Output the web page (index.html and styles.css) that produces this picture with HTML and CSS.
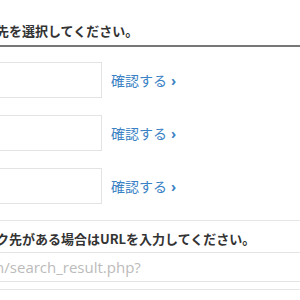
FILE: index.html
```html
<!DOCTYPE html>
<html lang="ja">
<head>
  <meta charset="UTF-8" />
  <meta name="viewport" content="width=device-width, initial-scale=1">
  <title>リンク先設定</title>
  <link rel="stylesheet" href="styles.css" />
</head>
<body>
  <main class="wrap">
    <section class="select-box">
      <h2 class="sec-title">遷移先を選択してください。</h2>
      <ul class="target-list">
        <li class="target-row">
          <div class="target-field"></div>
          <a class="check-link" href="#">確認する<span class="arrow">›</span></a>
        </li>
        <li class="target-row">
          <div class="target-field"></div>
          <a class="check-link" href="#">確認する<span class="arrow">›</span></a>
        </li>
        <li class="target-row">
          <div class="target-field"></div>
          <a class="check-link" href="#">確認する<span class="arrow">›</span></a>
        </li>
      </ul>
    </section>
    <section class="url-box">
      <h2 class="sec-title sub">リンク先がある場合はURLを入力してください。</h2>
      <input class="url-input" type="text" placeholder="ain/search_result.php?" />
      <div class="next-line"></div>
    </section>
  </main>
</body>
</html>
```

FILE: styles.css
```css
* {
  margin: 0;
  padding: 0;
  box-sizing: border-box;
}

html, body {
  width: 100%;
  height: 100%;
  background: #ffffff;
  overflow: hidden;
}

body {
  font-family: "Noto Sans CJK JP", "Open Sans", sans-serif;
  color: #333333;
}

.wrap {
  margin-left: -30px;
  width: 360px;
}

.sec-title {
  font-size: 13px;
  font-weight: bold;
  line-height: 20px;
  color: #333333;
  padding: 21px 0 4px;
  border-bottom: 2px solid #777777;
}

.sec-title.sub {
  padding: 8px 0 0;
  border-bottom: none;
}

.target-list {
  list-style: none;
  padding: 15px 0 16px;
  border-bottom: 1px solid #e6e6e6;
}

.target-row {
  display: flex;
  align-items: center;
  margin-bottom: 17px;
}

.target-row:last-child {
  margin-bottom: 0;
}

.target-field {
  width: 132px;
  height: 36px;
  border: 1px solid #e3e3e3;
  background: #ffffff;
}

.check-link {
  margin-left: 9px;
  font-size: 14px;
  color: #3b82c4;
  text-decoration: none;
}

.check-link .arrow {
  margin-left: 4px;
  font-family: "Open Sans", sans-serif;
  font-weight: bold;
}

.url-input {
  display: block;
  width: 360px;
  height: 30px;
  margin-top: 3px;
  padding: 0 12px;
  border: 1px solid #e3e3e3;
  font-family: "Open Sans", sans-serif;
  font-size: 15px;
  outline: none;
}

.url-input::placeholder {
  color: #bbbbbb;
}

.next-line {
  margin-top: 7px;
  border-top: 1px solid #e6e6e6;
}
```
